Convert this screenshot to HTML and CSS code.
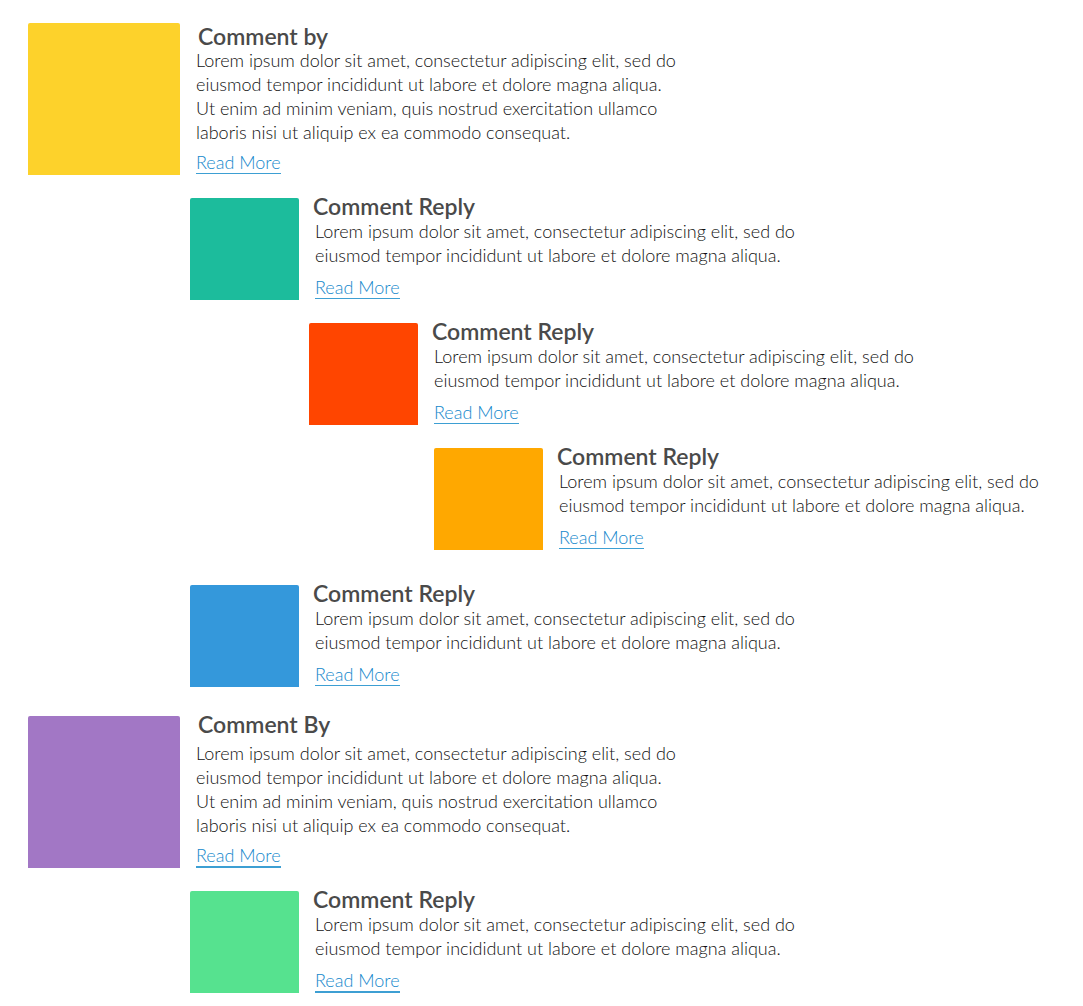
FILE: index.html
```html
<!DOCTYPE html>
<html lang="en">
<head>
<meta charset="utf-8">
<title>Comments</title>
<link rel="stylesheet" href="styles.css">
</head>
<body>
<main class="comments">
  <article class="comment">
    <div class="avatar yellow"></div>
    <div class="body">
      <h2 class="title">Comment by</h2>
      <p class="text">Lorem ipsum dolor sit amet, consectetur adipiscing elit, sed do eiusmod tempor incididunt ut labore et dolore magna aliqua. Ut enim ad minim veniam, quis nostrud exercitation ullamco laboris nisi ut aliquip ex ea commodo consequat.</p>
      <a class="more" href="#">Read More</a>
    </div>
  </article>
  <article class="comment reply">
    <div class="avatar teal"></div>
    <div class="body">
      <h3 class="title">Comment Reply</h3>
      <p class="text">Lorem ipsum dolor sit amet, consectetur adipiscing elit, sed do eiusmod tempor incididunt ut labore et dolore magna aliqua.</p>
      <a class="more" href="#">Read More</a>
    </div>
  </article>
  <article class="comment reply level-2">
    <div class="avatar red"></div>
    <div class="body">
      <h3 class="title">Comment Reply</h3>
      <p class="text">Lorem ipsum dolor sit amet, consectetur adipiscing elit, sed do eiusmod tempor incididunt ut labore et dolore magna aliqua.</p>
      <a class="more" href="#">Read More</a>
    </div>
  </article>
  <article class="comment reply level-3">
    <div class="avatar orange"></div>
    <div class="body">
      <h3 class="title">Comment Reply</h3>
      <p class="text">Lorem ipsum dolor sit amet, consectetur adipiscing elit, sed do eiusmod tempor incididunt ut labore et dolore magna aliqua.</p>
      <a class="more" href="#">Read More</a>
    </div>
  </article>
  <article class="comment reply branch">
    <div class="avatar blue"></div>
    <div class="body">
      <h3 class="title">Comment Reply</h3>
      <p class="text">Lorem ipsum dolor sit amet, consectetur adipiscing elit, sed do eiusmod tempor incididunt ut labore et dolore magna aliqua.</p>
      <a class="more" href="#">Read More</a>
    </div>
  </article>
  <article class="comment thread">
    <div class="avatar purple"></div>
    <div class="body">
      <h2 class="title">Comment By</h2>
      <p class="text">Lorem ipsum dolor sit amet, consectetur adipiscing elit, sed do eiusmod tempor incididunt ut labore et dolore magna aliqua. Ut enim ad minim veniam, quis nostrud exercitation ullamco laboris nisi ut aliquip ex ea commodo consequat.</p>
      <a class="more thick" href="#">Read More</a>
    </div>
  </article>
  <article class="comment reply">
    <div class="avatar green"></div>
    <div class="body">
      <h3 class="title">Comment Reply</h3>
      <p class="text">Lorem ipsum dolor sit amet, consectetur adipiscing elit, sed do eiusmod tempor incididunt ut labore et dolore magna aliqua.</p>
      <a class="more thick" href="#">Read More</a>
    </div>
  </article>
</main>
</body>
</html>
```
FILE: styles.css
```css
* { box-sizing: border-box; }

body {
  margin: 0;
  background: #fff;
  color: #111;
  font-family: Lato, "Liberation Sans", sans-serif;
}

.comments { padding: 23px 28px 12px; }

.comment {
  display: flex;
  align-items: flex-start;
  gap: 16px;
}

.avatar {
  flex: none;
  width: 152px;
  height: 152px;
  border-radius: 2px 2px 0 0;
}

.body { max-width: 484px; }

.title {
  margin: 0;
  padding: 1px 0 0 2px;
  color: #4a4a4a;
  font-size: 23px;
  line-height: 24px;
  font-weight: 600;
}

.text {
  margin: 0;
  font-size: 18px;
  line-height: 24px;
  font-weight: 300;
}

.more {
  display: inline-block;
  margin-top: 8px;
  border-bottom: 1px solid #3d9fd3;
  color: #1488cc;
  font-size: 18px;
  line-height: 21px;
  font-weight: 300;
  text-decoration: none;
}

.thick {
  border-bottom-width: 2px;
}

.reply {
  margin: 23px 0 0 162px;
}

.reply .avatar {
  width: 109px;
  height: 102px;
}

.reply .title {
  margin: -4px 0 1px -2px;
  padding: 0;
}

.reply .more { margin-top: 10px; }

.level-2 { margin-left: 281px; }
.level-3 { margin-left: 406px; }
.branch { margin-top: 35px; }
.thread { margin-top: 29px; }

.thread .title {
  margin: -4px 0 5px;
  padding-top: 0;
}

.yellow { background: #fdd22b; }
.teal { background: #1cbc9c; }
.red { background: #ff4500; }
.orange { background: #ffa800; }
.blue { background: #3498db; }
.purple { background: #a277c5; }
.green { background: #56e28f; }
```
